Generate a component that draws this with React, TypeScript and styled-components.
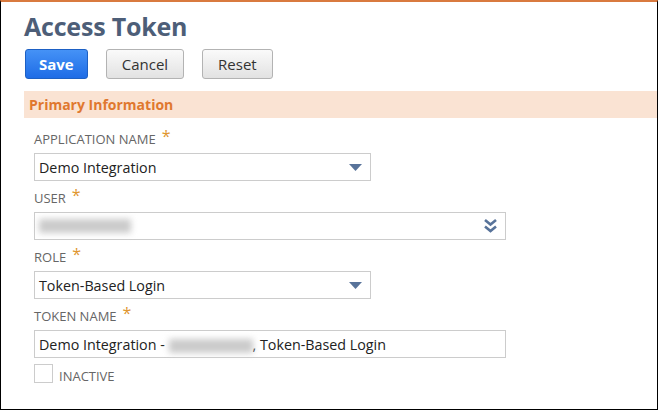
import { createGlobalStyle } from "styled-components";
import styled from "styled-components";

const GlobalStyle = createGlobalStyle`
  html, body {
    margin: 0;
    padding: 0;
    background: #ffffff;
  }
  body {
    font-family: "Open Sans", "Liberation Sans", sans-serif;
  }
`;

const Frame = styled.div`
  box-sizing: border-box;
  width: 658px;
  height: 410px;
  border: 1px solid #000;
  border-top: 2px solid #d97a3f;
  overflow: hidden;
  padding: 8px 0 0 23px;
`;

const Title = styled.h1`
  margin: 0;
  font-size: 25px;
  line-height: 32px;
  font-weight: 700;
  color: #4d5e78;
  letter-spacing: -0.2px;
`;

const Toolbar = styled.div`
  display: flex;
  gap: 18px;
  margin-top: 7px;
  padding-left: 1px;
`;

const Button = styled.button<{ primary?: boolean }>`
  box-sizing: border-box;
  height: 30px;
  padding: 0 ${(p) => (p.primary ? 13 : 15)}px;
  border-radius: 3px;
  font-family: "Open Sans", "Liberation Sans", sans-serif;
  font-size: 15px;
  font-weight: ${(p) => (p.primary ? 700 : 400)};
  color: ${(p) => (p.primary ? "#ffffff" : "#333333")};
  border: 1px solid ${(p) => (p.primary ? "#1d60c4" : "#b3b3b3")};
  background: ${(p) =>
    p.primary
      ? "linear-gradient(#4592f6, #1e6ce6)"
      : "linear-gradient(#fafafa, #e2e2e2)"};
`;

const SectionHeader = styled.div`
  margin-top: 12px;
  height: 27px;
  display: flex;
  align-items: center;
  padding-left: 5px;
  background: #fae3d3;
  color: #e0782f;
  font-size: 14px;
  font-weight: 700;
`;

const Fields = styled.div`
  display: flex;
  flex-direction: column;
  padding: 10px 0 0 10px;
`;

const Field = styled.div`
  display: flex;
  flex-direction: column;
  margin-bottom: 6px;

  &:last-of-type {
    margin-bottom: 4px;
  }
`;

const Label = styled.div`
  font-size: 13px;
  color: #666;
  height: 20px;
  line-height: 20px;
  margin-bottom: 5px;
`;

const Star = styled.span`
  color: #e0962f;
  font-size: 16px;
  margin-left: 6px;
  position: relative;
  top: -2px;
`;

const Box = styled.div<{ width: number }>`
  box-sizing: border-box;
  width: ${(p) => p.width}px;
  height: 28px;
  border: 1px solid #cccccc;
  display: flex;
  align-items: center;
  justify-content: space-between;
  padding: 0 8px 0 4px;
  font-size: 14.3px;
  color: #222;
`;

const Blur = styled.span<{ w: number }>`
  display: inline-block;
  width: ${(p) => p.w}px;
  height: 14px;
  background: #cbcbcb;
  filter: blur(3px);
  vertical-align: middle;
`;

const CheckRow = styled.div`
  display: flex;
  align-items: flex-end;
  gap: 6px;
`;

const Check = styled.span`
  box-sizing: border-box;
  width: 19px;
  height: 19px;
  border: 1px solid #cccccc;
`;

const CheckLabel = styled.span`
  font-size: 13px;
  color: #666;
  line-height: 14px;
`;

const Triangle = () => (
  <svg width="13" height="7" viewBox="0 0 13 7">
    <path d="M0 0 H13 L6.5 7 Z" fill="#58739a" />
  </svg>
);

const DoubleChevron = () => (
  <svg width="13" height="14" viewBox="0 0 13 14">
    <path d="M1 1 L6.5 5.5 L12 1" stroke="#58739a" strokeWidth="2.6" fill="none" />
    <path d="M1 7.5 L6.5 12 L12 7.5" stroke="#58739a" strokeWidth="2.6" fill="none" />
  </svg>
);

export default function App() {
  return (
    <Frame>
      <GlobalStyle />
      <Title>Access Token</Title>
      <Toolbar>
        <Button primary>Save</Button>
        <Button>Cancel</Button>
        <Button>Reset</Button>
      </Toolbar>
      <SectionHeader>Primary Information</SectionHeader>
      <Fields>
        <Field>
          <Label>
            APPLICATION NAME<Star>*</Star>
          </Label>
          <Box width={337}>
            <span>Demo Integration</span>
            <Triangle />
          </Box>
        </Field>
        <Field>
          <Label>
            USER<Star>*</Star>
          </Label>
          <Box width={472}>
            <Blur w={92} />
            <DoubleChevron />
          </Box>
        </Field>
        <Field>
          <Label>
            ROLE<Star>*</Star>
          </Label>
          <Box width={337}>
            <span>Token-Based Login</span>
            <Triangle />
          </Box>
        </Field>
        <Field>
          <Label>
            TOKEN NAME<Star>*</Star>
          </Label>
          <Box width={472}>
            <span>
              Demo Integration - <Blur w={84} />, Token-Based Login
            </span>
          </Box>
        </Field>
        <CheckRow>
          <Check />
          <CheckLabel>INACTIVE</CheckLabel>
        </CheckRow>
      </Fields>
    </Frame>
  );
}
